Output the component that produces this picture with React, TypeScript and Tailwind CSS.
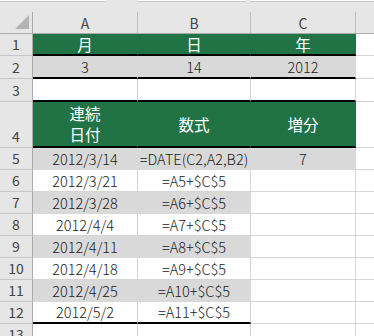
import React from "react";

type Fill = "green" | "grey" | "white";
type Bottom = "black" | "grid" | "none";
interface CellSpec {
  text?: React.ReactNode;
  fill: Fill;
  bottom: Bottom;
  cjk?: boolean;
}

const widths = ["w-[105px]", "w-[113px]", "w-[105px]"];

function DataCell({ spec, w }: { spec: CellSpec; w: string }) {
  const bg =
    spec.fill === "green"
      ? "bg-[#217346] text-white"
      : spec.fill === "grey"
      ? "bg-[#d9d9d9] text-[#222222]"
      : "bg-white text-[#222222]";
  const right = spec.fill === "white" ? "border-r border-r-[#d4d4d4]" : "border-r border-r-transparent";
  const bottom =
    spec.bottom === "black"
      ? "border-b-2 border-b-black"
      : spec.bottom === "grid"
      ? "border-b border-b-[#d4d4d4]"
      : "border-b border-b-transparent";
  return (
    <div className={`${w} shrink-0 h-full flex items-center justify-center ${bg} ${right} ${bottom}`}>
      {spec.text !== undefined && (
        <span
          className={`relative z-10 whitespace-nowrap text-center ${
            spec.cjk ? "text-[15.5px] leading-[21px] font-normal" : "text-[14.5px] leading-[20px] font-light"
          }`}
        >
          {spec.text}
        </span>
      )}
    </div>
  );
}

function Row({ num, h, cells, dBottom = "grid" }: { num: number; h: string; cells: CellSpec[]; dBottom?: Bottom }) {
  return (
    <div className={`flex ${h}`}>
      <div className="w-[33px] shrink-0 h-full bg-[#e6e6e6] border-r border-r-[#ababab] border-b border-b-[#c6c6c6] flex items-end justify-center">
        <span className="text-[14px] leading-[21px] text-[#444444]">{num}</span>
      </div>
      {cells.map((c, i) => (
        <DataCell key={i} spec={c} w={widths[i]} />
      ))}
      <div className={`flex-1 h-full bg-white ${dBottom === "grid" ? "border-b border-b-[#d4d4d4]" : ""}`} />
    </div>
  );
}

const dates = ["2012/3/21", "2012/3/28", "2012/4/4", "2012/4/11", "2012/4/18", "2012/4/25", "2012/5/2"];

export default function App() {
  return (
    <div className="w-[374px] h-[336px] overflow-hidden bg-white font-['Noto_Sans_CJK_JP','Noto_Sans',sans-serif]">
      {/* top strip */}
      <div className="flex h-[3px] bg-[#e6e6e6]">
        <div className="w-[105px] h-[2px] bg-white border-b border-b-[#c6c6c6]" />
        <div className="w-[32px]" />
        <div className="w-[109px] h-[2px] bg-white border-b border-b-[#c6c6c6]" />
        <div className="w-[4px]" />
        <div className="flex-1 h-[2px] bg-white border-b border-b-[#c6c6c6]" />
      </div>
      <div className="h-[9px] bg-[#e6e6e6]" />
      {/* column header */}
      <div className="flex h-[22px] bg-[#e6e6e6] border-b border-b-[#ababab] text-[#444444]">
        <div className="w-[33px] shrink-0 border-r border-r-[#ababab] relative">
          <svg className="absolute left-0 top-0" width="33" height="21" viewBox="0 0 33 21">
            <polygon points="29,3 29,17 15,17" fill="#b4b4b4" />
          </svg>
        </div>
        {["A", "B", "C"].map((l, i) => (
          <div key={l} className={`${widths[i]} shrink-0 border-r border-r-[#bdbdbd] flex items-center justify-center`}>
            <span className="text-[14px] leading-[20px]">{l}</span>
          </div>
        ))}
        <div className="flex-1" />
      </div>
      <Row
        num={1}
        h="h-[22px]"
        cells={[
          { text: "月", fill: "green", bottom: "black", cjk: true },
          { text: "日", fill: "green", bottom: "black", cjk: true },
          { text: "年", fill: "green", bottom: "black", cjk: true },
        ]}
      />
      <Row
        num={2}
        h="h-[23px]"
        cells={[
          { text: "3", fill: "grey", bottom: "black" },
          { text: "14", fill: "grey", bottom: "black" },
          { text: "2012", fill: "grey", bottom: "black" },
        ]}
      />
      <Row
        num={3}
        h="h-[23px]"
        cells={[
          { fill: "white", bottom: "black" },
          { fill: "white", bottom: "black" },
          { fill: "white", bottom: "black" },
        ]}
      />
      <Row
        num={4}
        h="h-[46px]"
        cells={[
          {
            text: (
              <>
                連続
                <br />
                日付
              </>
            ),
            fill: "green",
            bottom: "black",
            cjk: true,
          },
          { text: "数式", fill: "green", bottom: "black", cjk: true },
          { text: "増分", fill: "green", bottom: "black", cjk: true },
        ]}
      />
      <Row
        num={5}
        h="h-[22px]"
        cells={[
          { text: "2012/3/14", fill: "grey", bottom: "none" },
          { text: "=DATE(C2,A2,B2)", fill: "grey", bottom: "none" },
          { text: "7", fill: "grey", bottom: "none" },
        ]}
      />
      {dates.map((d, i) => {
        const n = 6 + i;
        const grey = n % 2 === 1;
        const last = n === 12;
        return (
          <Row
            key={n}
            num={n}
            h="h-[22px]"
            cells={[
              { text: d, fill: grey ? "grey" : "white", bottom: last ? "black" : grey ? "none" : "grid" },
              { text: `=A${n - 1}+$C$5`, fill: grey ? "grey" : "white", bottom: last ? "black" : grey ? "none" : "grid" },
              { fill: "white", bottom: "grid" },
            ]}
          />
        );
      })}
      <Row
        num={13}
        h="h-[22px]"
        cells={[
          { fill: "white", bottom: "grid" },
          { fill: "white", bottom: "grid" },
          { fill: "white", bottom: "grid" },
        ]}
      />
    </div>
  );
}
